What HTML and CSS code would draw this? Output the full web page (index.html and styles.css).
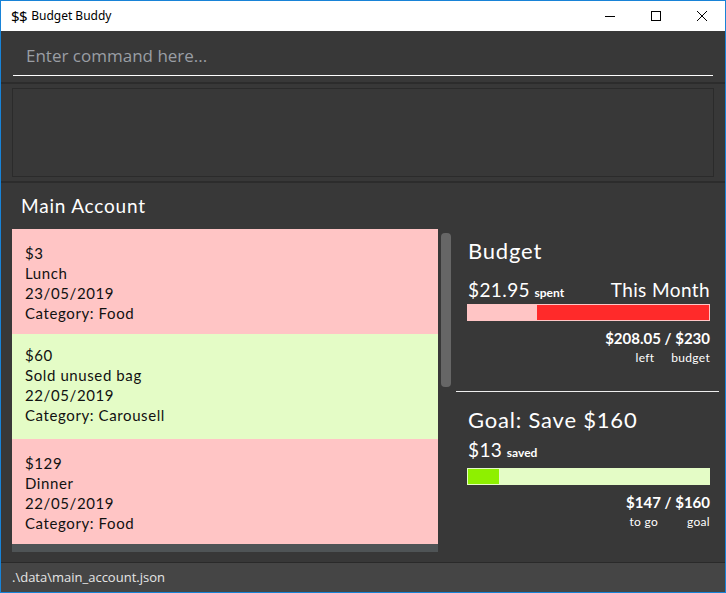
FILE: index.html
```html
<!DOCTYPE html>
<html>
<head>
<meta charset="utf-8">
<title>Budget Buddy</title>
<link rel="stylesheet" href="styles.css">
</head>
<body>
<div class="window">
  <div class="titlebar">
    <div class="title"><span class="app-icon">$$</span><span class="app-name">Budget Buddy</span></div>
    <div class="controls">
      <span class="ctl"><svg width="10" height="10" viewBox="0 0 10 10"><path d="M0 5.5H10" stroke="#000" stroke-width="1"/></svg></span>
      <span class="ctl"><svg width="10" height="10" viewBox="0 0 10 10"><rect x="0.5" y="0.5" width="9" height="9" fill="none" stroke="#000" stroke-width="1"/></svg></span>
      <span class="ctl"><svg width="10" height="10" viewBox="0 0 10 10"><path d="M0 0L10 10M10 0L0 10" stroke="#000" stroke-width="1"/></svg></span>
    </div>
  </div>

  <div class="command">
    <div class="command-input">Enter command here...</div>
  </div>
  <div class="sep"></div>
  <div class="result-box"></div>
  <div class="sep sep-last"></div>

  <div class="main">
    <div class="account-title">Main Account</div>
    <div class="content">
      <div class="list-wrap">
        <div class="list">
          <div class="list-items">
            <div class="item expense">
              <div>$3</div><div>Lunch</div><div>23/05/2019</div><div>Category: Food</div>
            </div>
            <div class="item income">
              <div>$60</div><div>Sold unused bag</div><div>22/05/2019</div><div>Category: Carousell</div>
            </div>
            <div class="item expense">
              <div>$129</div><div>Dinner</div><div>22/05/2019</div><div>Category: Food</div>
            </div>
          </div>
          <div class="hbar"></div>
        </div>
        <div class="vtrack"><div class="vthumb"></div></div>
      </div>

      <div class="panel">
        <div class="section">
          <div class="sec-title">Budget</div>
          <div class="sum-row">
            <div><span class="big">$21.95</span> <span class="small-bold">spent</span></div>
            <div class="big">This Month</div>
          </div>
          <div class="bar bar-budget"><div class="bar-rest" style="width:69px"></div><div class="bar-fill red"></div></div>
          <div class="amount">$208.05 / $230</div>
          <div class="labels"><span>left</span><span class="lbl-gap1">budget</span></div>
        </div>
        <div class="divider"></div>
        <div class="section">
          <div class="sec-title goal-title">Goal: Save $160</div>
          <div class="sum-row goal-row">
            <div><span class="big">$13</span> <span class="small-bold">saved</span></div>
          </div>
          <div class="bar bar-goal"><div class="bar-fill green" style="width:31px"></div></div>
          <div class="amount">$147 / $160</div>
          <div class="labels"><span>to go</span><span class="lbl-gap2">goal</span></div>
        </div>
      </div>
    </div>
  </div>

  <div class="status">.\data\main_account.json</div>
</div>
</body>
</html>
```

FILE: styles.css
```css
* { box-sizing: border-box; }
html, body { margin: 0; padding: 0; }
body { width: 726px; height: 593px; overflow: hidden; background: #383838; }

.window {
  width: 726px;
  height: 593px;
  border: 1px solid #1883d7;
  background: #383838;
  display: flex;
  flex-direction: column;
  font-family: "Lato", "Noto Sans", sans-serif;
}

.titlebar {
  height: 30px;
  background: #ffffff;
  display: flex;
  align-items: center;
  justify-content: space-between;
  flex: none;
}
.title { display: flex; align-items: center; padding-left: 10px; font-family: "Noto Sans", "Liberation Sans", sans-serif; color: #000; }
.app-icon { font-size: 15px; letter-spacing: -0.5px; margin-right: 4px; line-height: 1; }
.app-name { font-size: 12px; line-height: 1; }
.controls { display: flex; height: 30px; }
.ctl { width: 46px; height: 30px; display: flex; align-items: center; justify-content: center; }
.ctl svg { display: block; }

.command {
  height: 51px;
  flex: none;
  padding: 0 12px 6px 12px;
  display: flex;
  align-items: flex-end;
}
.command-input {
  width: 100%;
  height: 45px;
  border-bottom: 1px solid #ffffff;
  padding: 13px 0 0 13px;
  font-family: "Open Sans", "Noto Sans", sans-serif;
  font-size: 17px;
  line-height: 24px;
  color: #9a9ea4;
}
.sep { height: 2px; background: #2c2c2c; flex: none; }
.result-box {
  flex: none;
  height: 89px;
  margin: 4px 11px 4px 11px;
  border: 1px solid #2b2b2b;
}

.main { flex: 1; display: flex; flex-direction: column; padding-bottom: 10px; }
.account-title {
  height: 46px;
  flex: none;
  padding-left: 20px;
  color: #ffffff;
  font-size: 19px;
  line-height: 46px;
  letter-spacing: 0.8px;
}
.content { flex: 1; display: flex; }

.list-wrap { display: flex; padding-left: 11px; flex: none; }
.list { width: 426px; display: flex; flex-direction: column; }
.list-items { height: 315px; overflow: hidden; }
.hbar { height: 8px; background: #4f5456; }
.item {
  height: 105px;
  padding: 14px 0 0 13px;
  font-size: 15px;
  line-height: 20px;
  letter-spacing: 0.6px;
  color: #111;
}
.item.expense { background: #ffc5c5; }
.item.income { background: #e4fcc6; padding-top: 11px; }
.vtrack { width: 10px; margin-left: 3px; padding-top: 4px; }
.vthumb { width: 10px; height: 154px; background: #666666; border-radius: 4px; }

.panel { flex: 1; display: flex; flex-direction: column; color: #ffffff; }
.section { padding: 0 15px 0 16px; }
.sec-title { font-size: 22px; line-height: 26px; margin-top: 9px; padding-left: 1px; letter-spacing: 0.8px; }
.goal-title { margin-top: 14px; }
.sum-row { display: flex; justify-content: space-between; align-items: baseline; margin-top: 15px; line-height: 22px; padding-left: 1px; letter-spacing: 0.4px; }
.goal-row { margin-top: 6px; }
.big { font-size: 19px; }
.small-bold { font-size: 12px; font-weight: bold; letter-spacing: 0; }
.bar { height: 17px; margin-top: 0; display: flex; padding: 1px; }
.bar-goal { margin-top: 4px; }
.bar-budget { background: #ffc5c5; }
.bar-goal { background: #e4fcc6; }
.bar-fill { height: 100%; }
.bar-budget .bar-fill { flex: 1; }
.red { background: #ff2a2a; }
.green { background: #8ef000; }
.amount { text-align: right; font-size: 15px; font-weight: bold; line-height: 18px; margin-top: 8px; }
.labels { display: flex; justify-content: flex-end; font-size: 12px; line-height: 14px; margin-top: 4px; letter-spacing: 0.3px; }
.lbl-gap1 { margin-left: 17px; }
.lbl-gap2 { margin-left: 29px; }
.divider { height: 1px; background: #eeeeee; margin: 26px 6px 0 5px; }
.divider + .section .goal-title { margin-top: 15px; }

.status {
  flex: none;
  height: 30px;
  border-top: 1px solid #2a2a2a;
  background: #454545;
  color: #e6e6e6;
  font-family: "Open Sans", "Noto Sans", sans-serif;
  font-size: 13px;
  line-height: 28px;
  padding-left: 11px;
}
```
